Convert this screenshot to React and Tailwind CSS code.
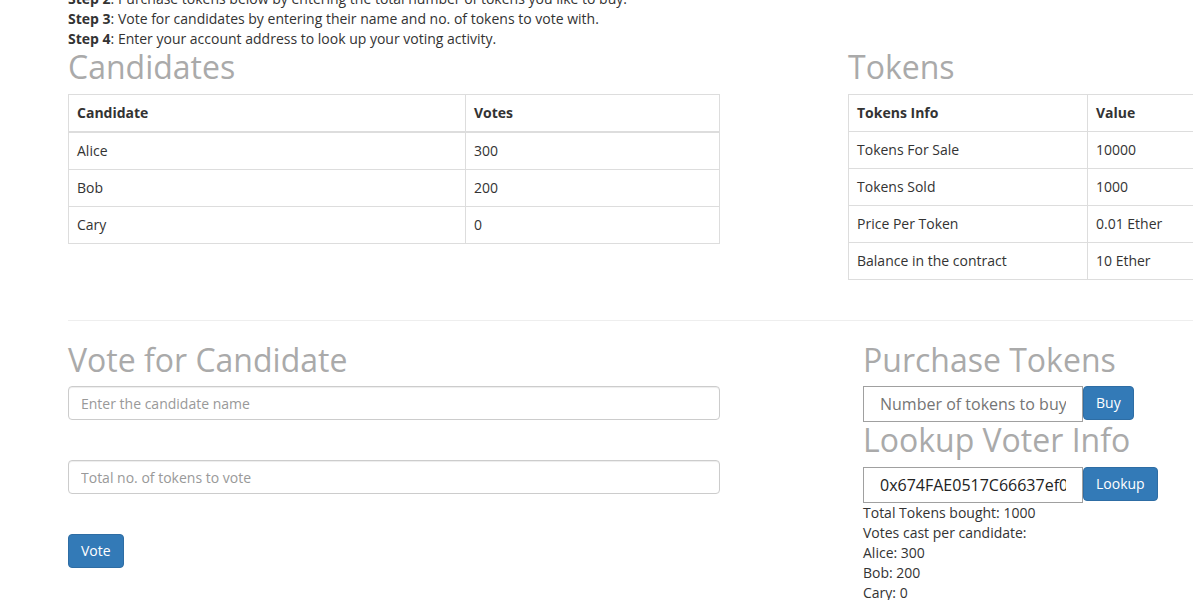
import React from "react";

const thC = "border border-[#ddd] px-2 py-2 text-left font-bold leading-5";
const tdC = "border border-[#ddd] px-2 py-2 leading-5";

function Heading({ children, className = "" }) {
  return (
    <h1 className={"text-[32px] leading-[35px] font-normal text-[#aaa] " + className}>
      {children}
    </h1>
  );
}

export default function App() {
  return (
    <div className="w-[1193px] h-[600px] overflow-hidden bg-white text-[#333] text-sm leading-5 font-['Open_Sans',sans-serif]">
      <div className="-mt-[11px] pl-[68px]">
        <div><b>Step 2</b>: Purchase tokens below by entering the total number of tokens you like to buy.</div>
        <div><b>Step 3</b>: Vote for candidates by entering their name and no. of tokens to vote with.</div>
        <div><b>Step 4</b>: Enter your account address to look up your voting activity.</div>
      </div>

      <div className="flex items-start pl-[68px]">
        <div className="w-[652px] shrink-0">
          <Heading className="mb-[10px]">Candidates</Heading>
          <table className="w-full border-collapse border border-[#ddd] table-fixed">
            <colgroup>
              <col className="w-[397px]" />
              <col />
            </colgroup>
            <thead>
              <tr>
                <th className={thC + " border-b-2"}>Candidate</th>
                <th className={thC + " border-b-2"}>Votes</th>
              </tr>
            </thead>
            <tbody>
              <tr><td className={tdC}>Alice</td><td className={tdC}>300</td></tr>
              <tr><td className={tdC}>Bob</td><td className={tdC}>200</td></tr>
              <tr><td className={tdC}>Cary</td><td className={tdC}>0</td></tr>
            </tbody>
          </table>
        </div>

        <div className="ml-[128px] w-[500px] shrink-0">
          <Heading className="mb-[10px]">Tokens</Heading>
          <table className="w-full border-collapse border border-[#ddd] table-fixed">
            <colgroup>
              <col className="w-[239px]" />
              <col />
            </colgroup>
            <thead>
              <tr>
                <th className={thC}>Tokens Info</th>
                <th className={thC}>Value</th>
              </tr>
            </thead>
            <tbody>
              <tr><td className={tdC}>Tokens For Sale</td><td className={tdC}>10000</td></tr>
              <tr><td className={tdC}>Tokens Sold</td><td className={tdC}>1000</td></tr>
              <tr><td className={tdC}>Price Per Token</td><td className={tdC}>0.01 Ether</td></tr>
              <tr><td className={tdC}>Balance in the contract</td><td className={tdC}>10 Ether</td></tr>
            </tbody>
          </table>
        </div>
      </div>

      <hr className="mt-[40px] ml-[68px] border-0 border-t border-[#eee]" />

      <div className="flex items-start pl-[68px] pt-[21px]">
        <div className="w-[652px] shrink-0">
          <Heading className="mb-[9px]">Vote for Candidate</Heading>
          <input
            type="text"
            placeholder="Enter the candidate name"
            className="block w-full h-[34px] px-3 py-1.5 text-sm border border-[#ccc] rounded shadow-[inset_0_1px_1px_rgba(0,0,0,0.075)] placeholder:text-[#999] bg-white"
          />
          <input
            type="text"
            placeholder="Total no. of tokens to vote"
            className="block w-full h-[34px] mt-[40px] px-3 py-1.5 text-sm border border-[#ccc] rounded shadow-[inset_0_1px_1px_rgba(0,0,0,0.075)] placeholder:text-[#999] bg-white"
          />
          <button className="mt-[40px] h-[34px] px-3 text-sm text-white bg-[#337ab7] border border-[#2e6da4] rounded">
            Vote
          </button>
        </div>

        <div className="ml-[143px] w-[330px] shrink-0">
          <Heading className="mb-[9px]">Purchase Tokens</Heading>
          <div className="flex items-start">
            <input
              type="text"
              placeholder="Number of tokens to buy"
              className="w-[220px] h-[36px] px-4 text-base text-center border border-[#a0a0a0] placeholder:text-[#757575] bg-white"
            />
            <button className="h-[34px] px-3 text-sm text-white bg-[#337ab7] border border-[#2e6da4] rounded">
              Buy
            </button>
          </div>
          <Heading className="mb-[10px]">Lookup Voter Info</Heading>
          <div className="flex items-start">
            <input
              type="text"
              defaultValue="0x674FAE0517C66637ef0d9b3a4c2e1f8a7b6c5d4e"
              className="w-[220px] h-[36px] px-4 text-base text-center text-[#222] border border-[#a0a0a0] bg-white"
            />
            <button className="h-[34px] px-3 text-sm text-white bg-[#337ab7] border border-[#2e6da4] rounded">
              Lookup
            </button>
          </div>
          <div>Total Tokens bought: 1000</div>
          <div>Votes cast per candidate:</div>
          <div>Alice: 300</div>
          <div>Bob: 200</div>
          <div>Cary: 0</div>
        </div>
      </div>
    </div>
  );
}
